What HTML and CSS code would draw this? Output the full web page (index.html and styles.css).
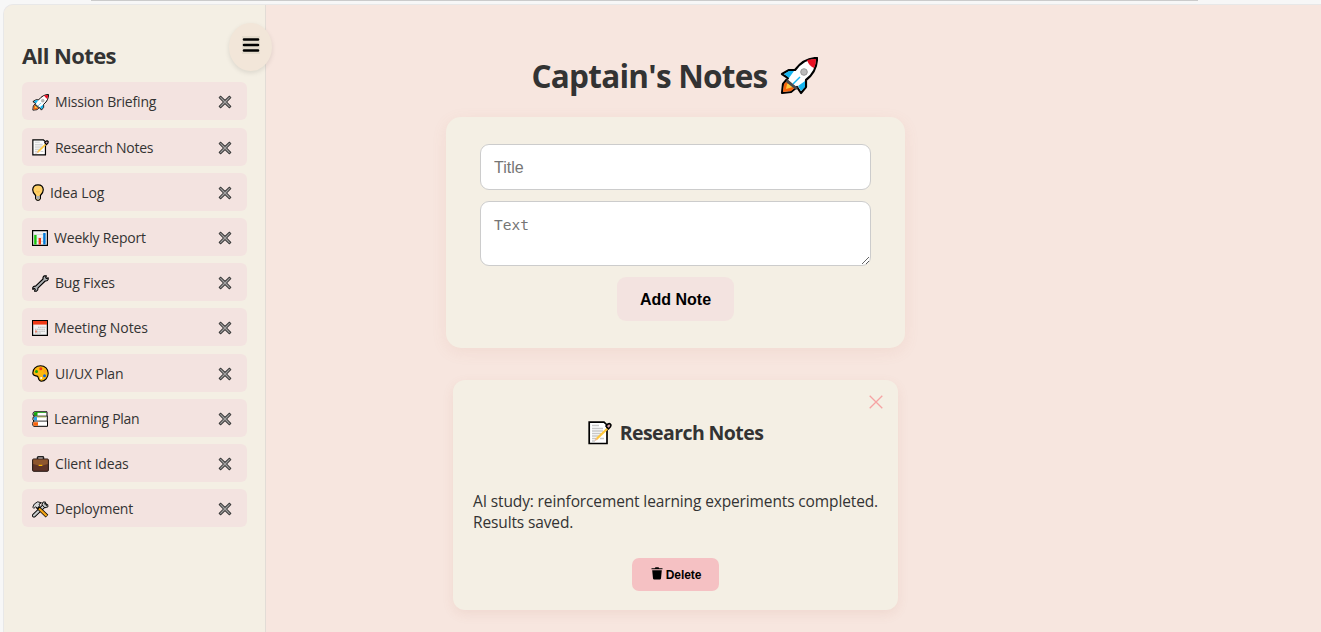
FILE: index.html
```html
<!DOCTYPE html>
<html lang="en">
<head>
<meta charset="utf-8">
<title>Captain's Notes</title>
<link rel="stylesheet" href="styles.css">
</head>
<body>
<svg class="defs" width="0" height="0" aria-hidden="true">
  <symbol id="rocket" viewBox="0 0 38 38">
    <path d="M2 36L3 27L8 21L2 17L9 13H15C21 5 29 1 37 1C37 9 34 17 26 23V30L21 36L17 30L11 35Z" fill="#fff" stroke="#000" stroke-width="2.2" stroke-linejoin="round"/>
    <path d="M4 17L9 14H14L9 21ZM25 24V30L21 34L18 29Z" fill="#18b5ef"/>
    <path d="M27 3Q31 2 36 2Q36 7 34 11Q29 9 27 3Z" fill="#e81224"/>
    <path d="M3 35L4 27L8 23L16 30L11 34Z" fill="#f7630c"/>
    <path d="M6 32L7 27L10 26L13 30Z" fill="#ffc83d"/>
    <path d="M7 22L18 31L16 33L6 25Z" fill="#464b50"/>
    <path d="M13 27L20 20" stroke="#18b5ef" stroke-width="1.5"/>
    <circle cx="24" cy="15" r="3.3" fill="#bbb" stroke="#999"/>
  </symbol>
  <symbol id="memo" viewBox="0 0 24 24">
    <path d="M1.2 1.2H16L19 4V22.5H1.2Z" fill="#fff" stroke="#000" stroke-width="1.7"/>
    <path d="M4 4.5H11M4 7.5H15M4 10H15M4 12.5H13M4 15H11M4 17.5H8M12 17.5H16M4 20H7" stroke="#c8c8c8" stroke-width="1.3"/>
    <path d="M8 18.5L20 7" stroke="#ffc83d" stroke-width="2.4"/>
    <path d="M7 19.5L9 17.5" stroke="#e8b9a0" stroke-width="1.5"/>
    <path d="M18 5L20 3Q22 2 23 4Q23 6 20.5 8Z" fill="#d3a0a8" stroke="#000" stroke-width="1.6"/>
  </symbol>
  <symbol id="bulb" viewBox="0 0 12 17">
    <path d="M3.6 11.5Q.7 8.8.7 5.8Q.9.8 6 .8T11.3 5.8Q11.3 8.8 8.4 11.5V14.5Q8 16.4 6 16.4T3.6 14.5Z" fill="#ffd067" stroke="#000" stroke-width="1.2"/>
    <path d="M4.2 12H7.8V14.5Q6 16.5 4.2 14.5Z" fill="#a9adb0"/>
    <path d="M4.5 7L6 8.5L7.5 7" fill="none" stroke="#eeb03b" stroke-width=".8"/>
  </symbol>
  <symbol id="chart" viewBox="0 0 16 16">
    <path d="M.6.6H15.4V15.4H.6Z" fill="#f2f2f2" stroke="#000" stroke-width="1.2"/>
    <path d="M2 4.5H14M2 8H14M2 11.5H14" stroke="#ccc" stroke-width=".6"/>
    <path d="M2.2 5H4.6V14.5H2.2Z" fill="#16c60c"/><path d="M6.6 8H9V14.5H6.6Z" fill="#f03a17"/><path d="M11.2 3H13.6V14.5H11.2Z" fill="#0078d7"/>
  </symbol>
  <symbol id="wrench" viewBox="0 0 17 17">
    <path d="M.8 12.6Q1.6 10.9 3.6 11.2L11 4Q10.6 1.6 12.6.8L14.4.9L13.7 2.7L14.4 3.4L16.2 2.7V4.4Q15.4 6.4 13.2 6L5.9 13.2Q6.4 15.3 4.4 16.2L2.5 16.1L3.3 14.3L2.6 13.6L.8 14.4Z" fill="#aeb2b4" stroke="#000" stroke-width="1.1" stroke-linejoin="round"/>
  </symbol>
  <symbol id="calendar" viewBox="0 0 16 16">
    <path d="M.6.6H15.4V15.4H.6Z" fill="#f2f2f2" stroke="#000" stroke-width="1.2"/>
    <path d="M1 1H15V4.6H1Z" fill="#f03a17"/>
    <path d="M6 7.3H13.5M3 9.3H13.5M3 11.3H13.5M3 13H9" stroke="#b5b5b5" stroke-width="1.1" stroke-dasharray="1.5 .6"/>
    <path d="M3 10.5H5V12.5H3Z" fill="#e8826d"/>
  </symbol>
  <symbol id="palette" viewBox="0 0 17 17">
    <path d="M.8 8C.8 3.8 4 .8 8.5.8S16.2 4 16.2 8.3S13 16.2 9.5 16.2C6 16.2 6.8 13 5.8 11.6C4.7 10.3.8 11.7.8 8Z" fill="#fbb80f" stroke="#000" stroke-width="1.1"/>
    <circle cx="4.5" cy="6.5" r="1.5" fill="#16a80c"/><circle cx="8.8" cy="3.8" r="1.5" fill="#f03a17"/><circle cx="12.8" cy="6.3" r="1.3" fill="#ff9a22"/><circle cx="12.5" cy="10.8" r="1.5" fill="#1266d8"/><circle cx="9.2" cy="13" r="1.1" fill="#fff"/>
  </symbol>
  <symbol id="books" viewBox="0 0 16 16">
    <path d="M2.3.8H15V4.9H15.3V10H15.5V15.3H2Q.5 15.3.7 12.5Q.8 10.5 2 10.2Q.6 9 1 7Q1.3 5.4 2.3 5.2Q.8 4.5 1 2.8Q1.2 1 2.3.8Z" fill="#fff" stroke="#000" stroke-width="1"/>
    <path d="M2 1.2H5.5V4.7H2ZM4 1H14V1.7H4Z" fill="#16a80c"/><path d="M2 6H5V9.5H2Z" fill="#2aa4e8"/><path d="M1.3 11.2H6V14.8H1.3Z" fill="#f7630c"/>
    <path d="M2 5.1H15M2 10.1H15" stroke="#000" stroke-width=".8"/><path d="M5 5.9H14" stroke="#8a9922" stroke-width=".8"/>
  </symbol>
  <symbol id="briefcase" viewBox="0 0 17 16">
    <path d="M5.5 3V1.5Q5.5.8 6.3.8H10.7Q11.5.8 11.5 1.5V3" fill="none" stroke="#222" stroke-width="1.5"/>
    <rect x=".6" y="3" width="15.8" height="12.3" rx="1" fill="#5e3428" stroke="#221410" stroke-width="1"/>
    <path d="M1.2 3.6H15.8V8L10.5 9.5H6.5L1.2 8Z" fill="#8e562e"/>
    <path d="M6.7 8.8H10.3V10H6.7Z" fill="#fcb900"/>
  </symbol>
  <symbol id="tools" viewBox="0 0 17 17">
    <path d="M2 14.5L13.2 3.8" stroke="#000" stroke-width="4" stroke-linecap="round"/>
    <path d="M2 14.5L13.2 3.8" stroke="#c9cccd" stroke-width="2.2" stroke-linecap="round"/>
    <path d="M11 1L10 3.8L12.8 6.8L16 5.8L15.7 3.5L14 4.4L12.7 3L13.5 1Z" fill="#c9cccd" stroke="#000" stroke-width=".9"/>
    <path d="M5 5.5L15 15.2" stroke="#000" stroke-width="3.7"/><path d="M7 7.5L14.7 14.9" stroke="#f4a516" stroke-width="2.2"/>
    <path d="M.8 6.2L2.3 3L5.7.8L9.5 1.8L7 3.2L7.8 4.7L5.2 7.2L3.6 5.7L2 7.4Z" fill="#d7d9da" stroke="#000" stroke-width=".9"/>
  </symbol>
  <symbol id="cross" viewBox="0 0 14 14">
    <path d="M1.2 2.6L2.6 1.2L7 5.4L11.4 1.2L12.8 2.6L8.6 7L12.8 11.4L11.4 12.8L7 8.6L2.6 12.8L1.2 11.4L5.4 7Z" fill="#a0a0a0" stroke="#3a3a3a" stroke-width="1.05" stroke-linejoin="round"/>
  </symbol>
</svg>
<div class="topline"></div>
<div class="app">
  <aside class="sidebar">
    <button class="menu" aria-label="Menu"><svg width="18" height="18" viewBox="0 0 18 18"><path d="M0 0H18V18H0Z" fill="#e5dccd"/><path d="M2 3.5H16M2 9H16M2 14.5H16" stroke="#000" stroke-width="2.6" stroke-linecap="round"/></svg></button>
    <h2><span class="w-all">All Notes</span></h2>
    <ul class="list">
      <li><svg width="17" height="17"><use href="#rocket"/></svg><span class="label">Mission Briefing</span><svg class="x" width="14" height="14"><use href="#cross"/></svg></li>
      <li><svg width="17" height="17"><use href="#memo"/></svg><span class="label tight">Research Notes</span><svg class="x" width="14" height="14"><use href="#cross"/></svg></li>
      <li><svg width="12" height="17"><use href="#bulb"/></svg><span class="label loose">Idea Log</span><svg class="x" width="14" height="14"><use href="#cross"/></svg></li>
      <li><svg width="16" height="16"><use href="#chart"/></svg><span class="label">Weekly Report</span><svg class="x" width="14" height="14"><use href="#cross"/></svg></li>
      <li><svg width="17" height="17"><use href="#wrench"/></svg><span class="label">Bug Fixes</span><svg class="x" width="14" height="14"><use href="#cross"/></svg></li>
      <li><svg width="16" height="16"><use href="#calendar"/></svg><span class="label loose">Meeting Notes</span><svg class="x" width="14" height="14"><use href="#cross"/></svg></li>
      <li><svg width="17" height="17"><use href="#palette"/></svg><span class="label loose">UI/UX Plan</span><svg class="x" width="14" height="14"><use href="#cross"/></svg></li>
      <li><svg width="16" height="16"><use href="#books"/></svg><span class="label tight">Learning Plan</span><svg class="x" width="14" height="14"><use href="#cross"/></svg></li>
      <li><svg width="17" height="16"><use href="#briefcase"/></svg><span class="label">Client Ideas</span><svg class="x" width="14" height="14"><use href="#cross"/></svg></li>
      <li><svg width="17" height="17"><use href="#tools"/></svg><span class="label">Deployment</span><svg class="x" width="14" height="14"><use href="#cross"/></svg></li>
    </ul>
  </aside>
  <main class="main">
    <h1><span>Captain's Notes</span><svg width="38" height="38"><use href="#rocket"/></svg></h1>
    <form class="form">
      <input type="text" placeholder="Title">
      <textarea placeholder="Text"></textarea>
      <button type="button" class="add">Add Note</button>
    </form>
    <article class="note">
      <svg class="close" width="14" height="14" viewBox="0 0 14 14"><path d="M.7.7L13.3 13.3M13.3.7L.7 13.3" stroke="#f6a3a3" stroke-width="1.3"/></svg>
      <h3><svg width="24" height="24"><use href="#memo"/></svg><span>Research Notes</span></h3>
      <p>AI study: reinforcement learning experiments completed.<br>Results saved.</p>
      <button type="button" class="delete"><svg width="12" height="13" viewBox="0 0 12 13"><path d="M.5 1.2H3.8L4.5.3H7.5L8.2 1.2H11.5V2.2H.5ZM1.2 3.2H10.8L10 11.5Q9.8 12.5 8.8 12.5H3.2Q2.2 12.5 2 11.5Z"/></svg><span>Delete</span></button>
    </article>
  </main>
</div>
</body>
</html>
```
FILE: styles.css
```css
* { box-sizing: border-box; }
body { margin: 0; height: 632px; overflow: hidden; background: #f7f7f7; color: #333; font-family: "Open Sans", "Noto Sans", sans-serif; }
.defs { position: absolute; }
svg { display: block; flex: none; }
h1, h2, h3, p, ul { margin: 0; padding: 0; }
button { border: 0; padding: 0; font-family: "Liberation Sans", Arial, sans-serif; font-weight: 700; color: #000; }
.topline { height: 1px; margin: 0 123px 3px 91px; background: #cbcbcb; }
.app { display: flex; height: 628px; margin-left: 3px; border-left: 1px solid #e8e8e8; border-top: 1px solid #e8e8e8; border-radius: 10px 0 0 0; overflow: hidden; background: #f7e6df; }
.sidebar { position: relative; width: 262px; flex: none; padding: 35px 18px 0; background: #f4efe4; border-right: 1px solid #e2dcd6; }
.menu { position: absolute; left: 225px; top: 18px; width: 43px; height: 48px; border-radius: 50%; background: #f2e6d9; display: flex; align-items: center; justify-content: center; padding-bottom: 4px; padding-left: 1px; box-shadow: 0 2px 5px rgba(0,0,0,.1); }
h2 { height: 42.4px; font-size: 22px; line-height: 31px; white-space: nowrap; }
.w-all { letter-spacing: -.6px; }
.list { list-style: none; display: flex; flex-direction: column; gap: 7.2px; }
.list li { width: 225px; height: 38px; padding: 2px 15px 0 10px; border-radius: 6px; background: #f3e3e0; display: flex; align-items: center; gap: 6px; font-size: 14px; }
.label { white-space: nowrap; line-height: 20px; letter-spacing: -.19px; }
.label.tight { letter-spacing: -.27px; }
.label.loose { letter-spacing: -.1px; }
.x { margin-left: auto; }
.main { width: 639px; padding: 49px 0 0 180px; }
h1 { height: 63px; font-size: 31.5px; line-height: 44px; letter-spacing: -.75px; display: flex; align-items: flex-start; justify-content: center; gap: 12px; padding-right: 2px; white-space: nowrap; }
h1 svg { margin-top: 3px; }
.form { width: 459px; height: 231px; padding: 27px 34px; border-radius: 15px; background: #f4efe4; display: flex; flex-direction: column; align-items: center; box-shadow: 0 4px 15px rgba(200,120,100,.1); }
input, textarea { width: 391px; border: 1px solid #ccc; border-radius: 9px; background: #fff; padding: 12px 13px; display: block; flex: none; }
input { height: 46px; padding-top: 14px; font: 16px "Liberation Sans", Arial, sans-serif; }
textarea { height: 65px; margin: 11px 0; padding-top: 14px; font: 14.5px/19px "DejaVu Sans Mono", monospace; }
input::placeholder, textarea::placeholder { color: #757575; }
.add { width: 117px; height: 44px; padding-top: 2px; border-radius: 9px; background: #f3e3e0; font-size: 16px; flex: none; }
.note { position: relative; width: 445px; height: 230px; margin: 32px 0 0 7px; padding: 38px 20px 0; border-radius: 12px; background: #f4efe4; display: flex; flex-direction: column; align-items: center; box-shadow: 0 4px 12px rgba(180,100,80,.1); }
.close { position: absolute; right: 15px; top: 15px; }
h3 { height: 73px; font-size: 19.5px; line-height: 30px; letter-spacing: -.58px; display: flex; align-items: flex-start; gap: 8px; white-space: nowrap; }
h3 svg { margin-top: 3px; }
.note p { width: 405px; height: 67px; font-size: 15.5px; line-height: 21px; letter-spacing: -.13px; white-space: nowrap; }
.delete { width: 87px; height: 33px; border-radius: 7px; background: #f5c1c3; display: flex; align-items: center; justify-content: center; gap: 3px; padding-left: 1px; font-size: 12px; letter-spacing: -.1px; }
.delete svg { margin-bottom: 3px; }
```
